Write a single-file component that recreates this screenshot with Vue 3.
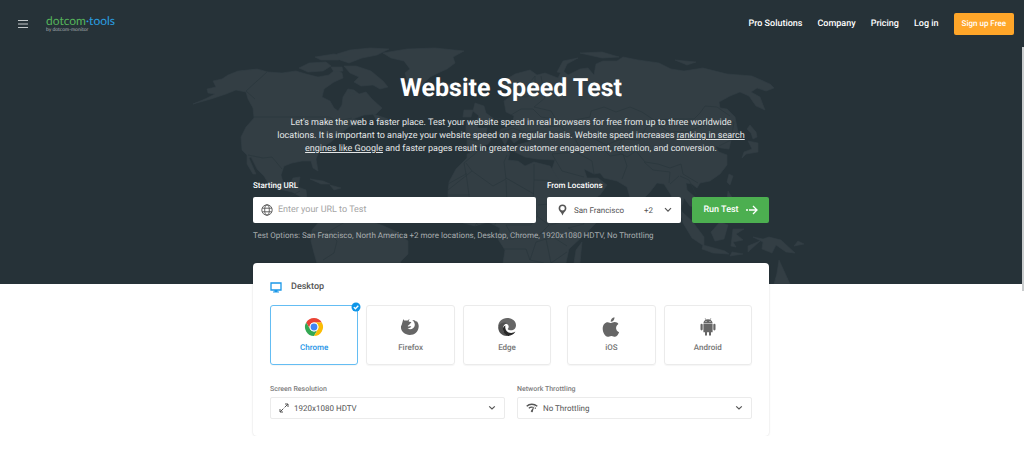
<script setup>
import { ref } from 'vue'

const links = ['Pro Solutions', 'Company', 'Pricing', 'Log in']
const platforms = [
  { id: 'chrome', name: 'Chrome' },
  { id: 'firefox', name: 'Firefox' },
  { id: 'edge', name: 'Edge' },
  { id: 'ios', name: 'iOS' },
  { id: 'android', name: 'Android' },
]
const platform = ref('chrome')
const url = ref('')
</script>

<template>
  <div class="page">
    <header class="topbar">
      <button class="menu" type="button" aria-label="Menu">
        <svg width="12" height="10" viewBox="0 0 12 10"><path d="M1 1.5h10M1 5h10M1 8.500h10" stroke="#c3c8ca" stroke-width="1.1" /></svg>
      </button>
      <a class="logo" href="#">
        <span class="brand"><span class="green">dotcom</span><span class="blue">·tools</span></span>
        <span class="by">by dotcom-monitor</span>
      </a>
      <nav class="nav">
        <a v-for="l in links" :key="l" href="#">{{ l }}</a>
        <a class="signup" href="#">Sign up Free</a>
      </nav>
    </header>

    <section class="hero">
      <svg class="map" viewBox="180 40 660 244" aria-hidden="true">
        <g fill="#333e44" stroke="#333e44" stroke-width=".6" stroke-linejoin="round">
          <path d="M193 104L205 99L215 94L208 93L207 89L216 87L213 81L222 79L228 75L238 71L257 69L268 72L282 73L296 71L306 74L318 77L329 75L336 69L342 73L343 78L334 82L324 89L322 97L330 101L334 108L338 111L342 105L343 97L348 89L354 90L359 94L366 92L372 99L382 108L376 114L364 115L353 119L362 121L359 125L350 126L344 131L337 136L331 142L326 145L319 151L316 159L318 171L313 168L311 161L302 161L292 163L284 166L281 175L283 182L290 184L293 178L300 177L298 187L306 190L307 199L314 200L309 202L301 197L292 192L279 189L268 183L264 176L257 169L251 157L249 158L256 174L253 174L247 164L247 155L242 150L241 137L246 127L254 118L253 108L248 99L246 92L236 90L226 94L211 99Z" />
          <path d="M299 68L309 63L326 62L331 66L323 71L308 72ZM315 57L334 54L348 57L338 60L321 60ZM337 54L350 50L370 48L389 49L377 55L362 58L349 63L340 60ZM344 66L356 66L371 71L383 81L388 87L380 89L373 85L361 86L354 82L359 77L350 73ZM331 67L342 67L343 71L334 72ZM347 90L356 93L351 96ZM373 114L388 119L386 123L377 121Z" />
          <path d="M383 53L407 49L435 48L464 51L453 57L455 63L447 69L438 73L430 77L421 86L416 87L407 80L405 73L410 69L404 61L391 58Z" />
          <path d="M441 88L448 84L461 86L464 90L455 94L443 92ZM310 179L323 181L330 184L321 184ZM330 185L341 188L334 190Z" />
          <path d="M311 204L319 205L326 202L342 204L354 208L365 212L376 216L375 223L384 226L397 232L408 241L408 254L401 261L396 275L391 284L318 284L320 274L314 253L311 241L312 230L319 222Z" />
          <path d="M466 122L476 122L478 128L487 128L486 134L496 137L501 129L512 126L514 116L506 112L504 101L511 96L512 87L503 90L502 82L515 74L530 70L537 75L545 73L558 78L562 70L568 75L580 69L588 68L594 75L596 64L603 61L617 61L623 57L638 60L659 63L671 69L684 71L703 68L727 74L752 76L770 84L774 88L766 91L757 88L751 92L760 97L765 110L756 106L749 96L740 92L730 96L719 102L720 108L727 109L735 117L738 132L731 140L729 149L721 148L715 146L719 152L727 155L727 165L720 174L710 181L700 183L697 188L692 184L686 183L687 190L696 198L699 208L690 206L684 198L681 209L686 220L678 216L673 205L671 195L664 184L657 183L650 192L641 201L637 211L631 201L627 187L617 181L604 178L600 173L594 174L584 169L587 178L598 178L607 185L600 195L583 205L571 209L565 198L559 186L551 172L555 160L537 159L525 157L513 151L517 145L531 141L521 138L514 143L509 137L505 145L500 136L496 133L488 144L479 147L474 154L467 151L467 138L474 137L466 133Z" />
          <path d="M475 103L484 106L486 113L494 119L489 124L475 123L479 116L473 111ZM464 110L473 110L471 117L463 117ZM557 72L563 61L578 58L567 64L563 73ZM580 53L602 52L619 57L602 58ZM675 60L696 62L687 65Z" />
          <path d="M467 154L477 151L491 151L506 149L510 153L508 160L518 161L525 166L534 162L550 166L559 180L567 197L575 211L587 211L601 210L597 222L583 236L569 249L566 263L560 284L511 284L503 263L505 250L498 239L500 228L488 222L475 226L463 223L453 214L448 205L448 192L449 182L456 169L467 158Z" />
          <path d="M750 125L756 132L757 137L753 139L751 133L747 129ZM748 141L758 143L758 152L746 154L742 158L744 152L752 149ZM729 174L733 176L730 185L727 182ZM728 191L733 199L735 205L727 200ZM716 204L729 205L726 210L717 208ZM681 211L692 221L704 237L704 246L692 238L683 223ZM703 245L725 251L729 254L713 253L702 249ZM711 232L720 222L728 225L724 239L715 241ZM733 229L744 229L736 234L743 240L733 242L736 247L731 246ZM732 252L743 254L730 256ZM748 246L760 241L748 252ZM753 237L763 239L769 237L781 240L795 253L786 252L776 245L772 253L762 249L763 242ZM774 284L777 273L779 260L785 273L790 284ZM798 241L804 244L794 246ZM648 211L654 218L650 220ZM576 250L582 242L580 263L572 275Z" />
        </g>
        <g fill="none" stroke="#2a363c" stroke-width=".7" stroke-linejoin="round">
          <path d="M267 72L246 91L255 99M253 117H329L337 121L352 118M248 155L263 158L272 157L282 169M289 197L300 191M331 201L330 217L345 222L328 232L313 232M345 222L365 213M328 232L337 241L334 253L323 260M356 209L361 216L372 216M320 272L343 270L357 284" />
          <path d="M467 139L478 141M487 128L498 137M488 123L498 118L513 123M501 132L513 128L526 133L539 130M511 115L521 109L533 109L541 117L556 119M514 96L526 97L535 92L535 76L523 91M541 76L545 98L534 107L551 111L560 126L544 127M557 119L565 124L575 120L590 117L591 111L604 107L616 112L630 107L642 112L654 120L645 129L640 140L621 139L606 145L593 138L578 131L568 137L561 126M655 120L674 119L694 119L700 113L705 106L717 107L730 116M653 120L667 131L687 132L704 125L719 122L734 122L731 140L719 146M622 139L616 151L627 157L636 151L645 162L658 164L670 168L681 164L683 174L698 183M601 147L610 156L623 154L627 166L622 179M644 162L653 170L670 172L669 183M594 174L592 161L576 152L552 154L562 171L584 177M574 137L580 148L602 151M680 176L689 180L696 194M670 184L679 176" />
          <path d="M477 152L464 163L466 174L448 184M466 163L472 171L448 190M472 171L493 186L506 179L504 162L507 155M534 164V180L533 205M506 178L534 194M534 180L564 181M448 195H469L466 173M469 194L470 215L478 225M475 226L484 211L507 204L506 180M494 226L502 213L527 211L533 205L538 215L531 225H506M506 225L514 239L500 239M514 238L536 238L549 225L537 216M550 225L565 221L570 212M504 249L526 249L530 260L544 263L543 284M510 270L531 270M530 260L536 242L553 237L567 246M546 239L551 263L567 252M561 198L549 204L538 205M565 209L580 214L584 224L568 228L580 233" />
        </g>
      </svg>

      <div class="inner">
        <h1>Website Speed Test</h1>
        <p class="lead">
          Let's make the web a faster place. Test your website speed in real browsers for free from up to three worldwide
          locations. It is important to analyze your website speed on a regular basis. Website speed increases
          <a href="#">ranking in search engines like Google</a> and faster pages result in greater customer engagement, retention, and conversion.
        </p>
        <form class="form" @submit.prevent>
          <div class="field grow">
            <label for="url">Starting URL</label>
            <div class="box urlbox">
              <svg width="12" height="12" viewBox="0 0 12 12" fill="none" stroke="#555" stroke-width=".9"><circle cx="6" cy="6" r="5.200" /><ellipse cx="6" cy="6" rx="2.300" ry="5.200" /><path d="M1.200 4.200h9.600M1.200 7.800h9.600" /></svg>
              <input id="url" v-model="url" type="text" placeholder="Enter your URL to Test" />
            </div>
          </div>
          <div class="field">
            <label for="loc">From Locations</label>
            <button id="loc" class="box locbox" type="button" aria-haspopup="listbox">
              <svg width="9" height="12" viewBox="0 0 9 12"><path fill="#555" fill-rule="evenodd" d="M4.500.4C2.200.4.6 2 .6 4.200c0 2.300 1.700 3.300 2.700 4.800L4.500 11.600 5.700 9C6.700 7.500 8.400 6.500 8.400 4.200 8.400 2 6.800.4 4.500.4Zm0 1.500a2.300 2.300 0 0 1 0 4.600 2.300 2.300 0 0 1 0-4.600Z" /></svg>
              <span class="city">San Francisco</span>
              <span>+2</span>
              <svg class="chev" width="8" height="6" viewBox="0 0 8 6"><path d="M1 1.200l3 3 3-3" fill="none" stroke="#555" stroke-width="1.200" /></svg>
            </button>
          </div>
          <button class="run" type="submit">
            Run Test
            <svg width="12" height="10" viewBox="0 0 12 10" fill="none" stroke="#fff" stroke-width="1.300"><path d="M0 5h2M3 5h8M7 1l4 4-4 4" /></svg>
          </button>
        </form>
        <p class="options">Test Options: San Francisco, North America +2 more locations, Desktop, Chrome, 1920x1080 HDTV, No Throttling</p>
      </div>
    </section>

    <section class="panel">
      <h2>
        <svg width="12" height="11" viewBox="0 0 12 11"><path d="M1 1h10v7H1Z" fill="none" stroke="#1b98e8" stroke-width="1.300" /><path d="M4.500 8h3v1.400H9v1H3v-1h1.500Z" fill="#1b98e8" /></svg>
        Desktop
      </h2>
      <div class="cards" role="radiogroup" aria-label="Platform">
        <label v-for="p in platforms" :key="p.id" class="card" :class="[p.id, { on: platform === p.id }]">
          <input v-model="platform" type="radio" name="platform" :value="p.id" />
          <svg v-if="p.id === 'chrome'" width="20" height="20" viewBox="0 0 20 20">
            <path d="M2.200 5.500A9 9 0 0 1 17.800 5.500H10A4.500 4.500 0 0 0 6.100 12.300Z" fill="#ea4335" />
            <path d="M2.200 5.500A9 9 0 0 0 10 19l3.900-6.800a4.500 4.500 0 0 1-7.800 0Z" fill="#34a853" />
            <path d="M17.800 5.500A9 9 0 0 1 10 19l3.900-6.800A4.500 4.500 0 0 0 10 5.500Z" fill="#fbbc05" />
            <circle cx="10" cy="10" r="4.400" fill="#fff" /><circle cx="10" cy="10" r="3.400" fill="#4285f4" />
          </svg>
          <svg v-else-if="p.id === 'firefox'" width="20" height="20" viewBox="0 0 20 20">
            <path fill="#666" d="M2.300 2.300c.6.300 1 .9 1.300 1.500 1-.4 1.900-.3 2.600 0 .6-.8 1.500-1.300 2.600-1.500-.8.700-1.200 1.300-1.200 1.900.8.700 1.900.6 2.600.9.100.8-.5 1.200-1.300 1.600-.4.400-.4 1-.9 1.300-.7.300-1.300.5-1.200 1.200 1 .6 2.400-.3 3.300.3.300.6-.7.800-1.300 1.200-.9.600-1.800.8-2.500.6 1.600 1.400 4.300 1.400 6-.2 1.500-1.400 1.800-3.200 1.200-4.800-.3-1.400-1.100-2.600-2.400-3.300 2-.3 3.400.5 4.300 2l.1-1.300c1.400 1.700 2.300 3.500 2.200 5.700-.2 5-4 8.500-9 8.500-5.100 0-8.800-3.500-8.900-8.300C1.100 7.800 1.500 4.500 2.300 2.300Z" />
          </svg>
          <svg v-else-if="p.id === 'edge'" width="20" height="20" viewBox="0 0 20 20">
            <path fill="#666" d="M1.200 10C1.200 4.500 5 1 10.100 1c5 0 8.900 3.200 8.900 7.200 0 3-2.100 5-5 5-1.900 0-3.200-.5-3.200-1.200 0-.5.900-.9.900-2.200 0-1.800-1.500-3.300-3.700-3.300C4.700 6.500 2.400 8 1.200 10Z" />
            <path fill="#505050" d="M1.200 10c.8-3 3.300-4.500 6.300-4.500 1.200 0 2.300.3 3.100 1C8.100 6 6 8.300 6 11.500c0 3.500 2 6.300 5 7.400C5 19.600 1 15 1.200 10Z" />
            <path fill="#292929" d="M8.500 8.400C7.300 12.500 10.300 16 14.200 16c1.500 0 2.800-.6 3.700-1.200.3-.2.500 0 .3.300A9 9 0 0 1 11 19c-3.200-.9-5.200-3.800-5.100-7.200.1-1.700 1.100-3 2.600-3.400Z" />
          </svg>
          <svg v-else-if="p.id === 'ios'" width="20" height="20" viewBox="0 0 20 20">
            <path fill="#666" d="M13.500.2c.2 2.300-1.500 4.500-3.800 4.600C9.500 2.500 11.300.5 13.500.2ZM10 6c.9 0 2-.9 3.700-.9 1.600.1 2.900.7 3.700 1.900-3.500 2.200-2.800 6.800.7 8.200-.8 2-2.100 4.500-4 4.500-1.400 0-1.900-.8-3.700-.8s-2.300.8-3.700.8C4 19.700 1.700 15.300 1.700 11.500c0-4 2.500-6.300 5-6.300C8.200 5.200 9.200 6 10 6Z" />
          </svg>
          <svg v-else width="20" height="20" viewBox="0 0 20 20">
            <path fill="#666" d="M5.400 6.500C5.500 4.800 6.300 3.500 7.600 2.700L6.700 1.200l.4-.2.900 1.500a6 6 0 0 1 4 0l.9-1.500.4.200-.9 1.500c1.300.8 2.100 2.100 2.200 3.800ZM8 4a.5.500 0 1 0 0 1 .5.500 0 0 0 0-1Zm4 0a.5.500 0 1 0 0 1 .5.500 0 0 0 0-1ZM5.400 7h9.200v8.300H13v2.500a1 1 0 0 1-2 0v-2.500H9v2.500a1 1 0 0 1-2 0v-2.500H5.400ZM2.500 7.800a1.100 1.100 0 0 1 2.200 0v4.500a1.100 1.100 0 0 1-2.200 0Zm12.800 0a1.100 1.100 0 0 1 2.200 0v4.500a1.100 1.100 0 0 1-2.200 0Z" />
          </svg>
          <span>{{ p.name }}</span>
          <svg v-if="platform === p.id" class="tick" width="10" height="10" viewBox="0 0 10 10"><circle cx="5" cy="5" r="4.500" fill="#0d95e8" /><path d="M2.800 5.100l1.600 1.600 2.900-3" fill="none" stroke="#fff" stroke-width="1.300" /></svg>
        </label>
      </div>
      <div class="selects">
        <div class="sel">
          <label for="res">Screen Resolution</label>
          <div class="selbox">
            <svg width="10" height="10" viewBox="0 0 10 10" fill="none" stroke="#555" stroke-width="1"><path d="M5.600 4.400L9 1M6 1h3v3M4.400 5.600L1 9M1 6v3h3" /></svg>
            <select id="res"><option>1920x1080 HDTV</option></select>
            <svg class="chev" width="8" height="6" viewBox="0 0 8 6"><path d="M1.200 1.400L4 4l2.800-2.600" fill="none" stroke="#555" stroke-width="1.200" /></svg>
          </div>
        </div>
        <div class="sel">
          <label for="thr">Network Throttling</label>
          <div class="selbox">
            <svg width="12" height="10" viewBox="0 0 12 10" fill="none" stroke="#555"><path d="M.7 3.300C3.500.6 8 .6 11.300 3.300" stroke-width="1.400" /><path d="M2.800 5.300c1.200-1 2.600-1.400 4-1M8.800 4.700l1 .7" stroke-width="1.200" /><path d="M8.600 2.500L6.900 8a1 1 0 1 1-1.600-.7Z" fill="#555" stroke="none" /></svg>
            <select id="thr"><option>No Throttling</option></select>
            <svg class="chev" width="8" height="6" viewBox="0 0 8 6"><path d="M1.200 1.400L4 4l2.800-2.600" fill="none" stroke="#555" stroke-width="1.200" /></svg>
          </div>
        </div>
      </div>
    </section>
    <div class="scroll"></div>
  </div>
</template>

<style>
body {
  background: #fff;
}
</style>

<style scoped>
.page {
  position: relative;
  padding-right: 2px;
  background: linear-gradient(#263238, #263238) right top / 2px 47px no-repeat;
  font-family: Roboto, "Liberation Sans", sans-serif;
  font-size: 8px;
  text-rendering: geometricPrecision;
  color: #555;
}
.page * {
  box-sizing: border-box;
}
a {
  color: inherit;
  text-decoration: none;
}
button,
input,
select {
  font: inherit;
  text-rendering: inherit;
  color: inherit;
  border: 0;
  padding: 0;
  background: none;
}
svg {
  flex: none;
  display: block;
}
.topbar {
  display: flex;
  align-items: center;
  height: 47px;
  padding: 0 8px 0 17px;
  background: #263238;
}
.logo {
  display: flex;
  flex-direction: column;
  margin-left: 17px;
  font-family: Lato, sans-serif;
}
.brand {
  font-size: 12px;
  line-height: 12px;
}
.green {
  color: #55b45b;
}
.blue {
  color: #2a9fe0;
}
.by {
  font-size: 5px;
  line-height: 6px;
  color: #aab0b3;
}
.nav {
  display: flex;
  align-items: center;
  gap: 15px;
  margin-left: auto;
  font-size: 9px;
  font-weight: 500;
  color: #fff;
}
.signup {
  padding: 0 8px;
  border-radius: 2px;
  background: #ffa629;
  font-size: 8px;
  line-height: 22px;
}
.hero {
  position: relative;
  overflow: hidden;
  padding: 27px 0 42px;
  background: #263238;
  color: #fff;
}
.map {
  position: absolute;
  top: -7px;
  left: calc(50% - 331px);
  width: 660px;
}
.inner,
.panel {
  position: relative;
  width: 516px;
  max-width: 100%;
  margin: 0 auto;
}
h1 {
  margin: 0 0 13px;
  font-size: 25px;
  line-height: 30px;
  font-weight: 700;
  text-align: center;
}
.lead {
  max-width: 476px;
  margin: 0 auto 24px;
  font-size: 9px;
  line-height: 13px;
  text-align: center;
  color: #e4e6e7;
}
.lead a {
  text-decoration: underline;
}
.form {
  display: flex;
  align-items: flex-end;
  gap: 11px;
}
.field {
  display: flex;
  flex-direction: column;
  gap: 5px;
}
.grow {
  flex: 1;
}
.field label {
  font-weight: 500;
  line-height: 12px;
}
.box {
  display: flex;
  align-items: center;
  height: 26px;
  border-radius: 2px;
  background: #fff;
  color: #555;
}
.urlbox {
  padding: 0 8px;
  gap: 5px;
}
.urlbox input {
  flex: 1;
  min-width: 0;
  font-size: 9px;
  outline: 0;
}
.urlbox input::placeholder {
  color: #a5a5a5;
}
.locbox {
  width: 134px;
  padding: 0 9px 0 11px;
}
.city {
  flex: 1;
  margin-left: 7px;
  text-align: left;
}
.locbox .chev {
  margin-left: 11px;
}
.run {
  display: flex;
  align-items: center;
  justify-content: center;
  gap: 7px;
  width: 77px;
  height: 26px;
  border-radius: 2px;
  background: #4caf50;
  color: #fff;
  font-size: 9px;
  font-weight: 500;
}
.options {
  margin: 7px 0 0;
  line-height: 12px;
  color: #a8adaf;
}
.panel {
  margin-top: -21px;
  padding: 17px 17px 17px;
  border-radius: 4px;
  background: #fff;
  box-shadow: 0 0 2px rgba(0, 0, 0, .18);
}
h2 {
  display: flex;
  align-items: center;
  gap: 9px;
  margin: 0 0 11px;
  font-size: 9px;
  line-height: 14px;
  font-weight: 500;
}
.cards {
  display: flex;
  gap: 8px;
}
.card {
  position: relative;
  flex: 1;
  display: flex;
  flex-direction: column;
  align-items: center;
  gap: 5px;
  height: 60px;
  padding-top: 11px;
  border: 1px solid #ebebeb;
  border-radius: 3px;
  box-shadow: 0 1px 1px rgba(0, 0, 0, .04);
  font-weight: 500;
  line-height: 12px;
  color: #757575;
}
.card.ios {
  margin-left: 8px;
}
.card.on {
  border-color: #64bdf3;
  color: #2494e6;
}
.card input {
  position: absolute;
  opacity: 0;
}
.tick {
  position: absolute;
  top: -4px;
  right: -4px;
}
.selects {
  display: flex;
  gap: 12px;
  margin-top: 18px;
}
.sel {
  flex: 1;
  display: flex;
  flex-direction: column;
  gap: 2px;
}
.sel label {
  font-size: 7px;
  font-weight: 500;
  line-height: 12px;
  color: #7d7d7d;
}
.selbox {
  display: flex;
  align-items: center;
  gap: 5px;
  height: 22px;
  padding: 0 8px;
  border: 1px solid #ebebeb;
  border-radius: 2px;
}
.selbox select {
  flex: 1;
  min-width: 0;
  appearance: none;
  outline: 0;
}
.scroll {
  position: absolute;
  top: 47px;
  right: 0;
  width: 2px;
  height: 244px;
  background: #c9cccd;
}
</style>
